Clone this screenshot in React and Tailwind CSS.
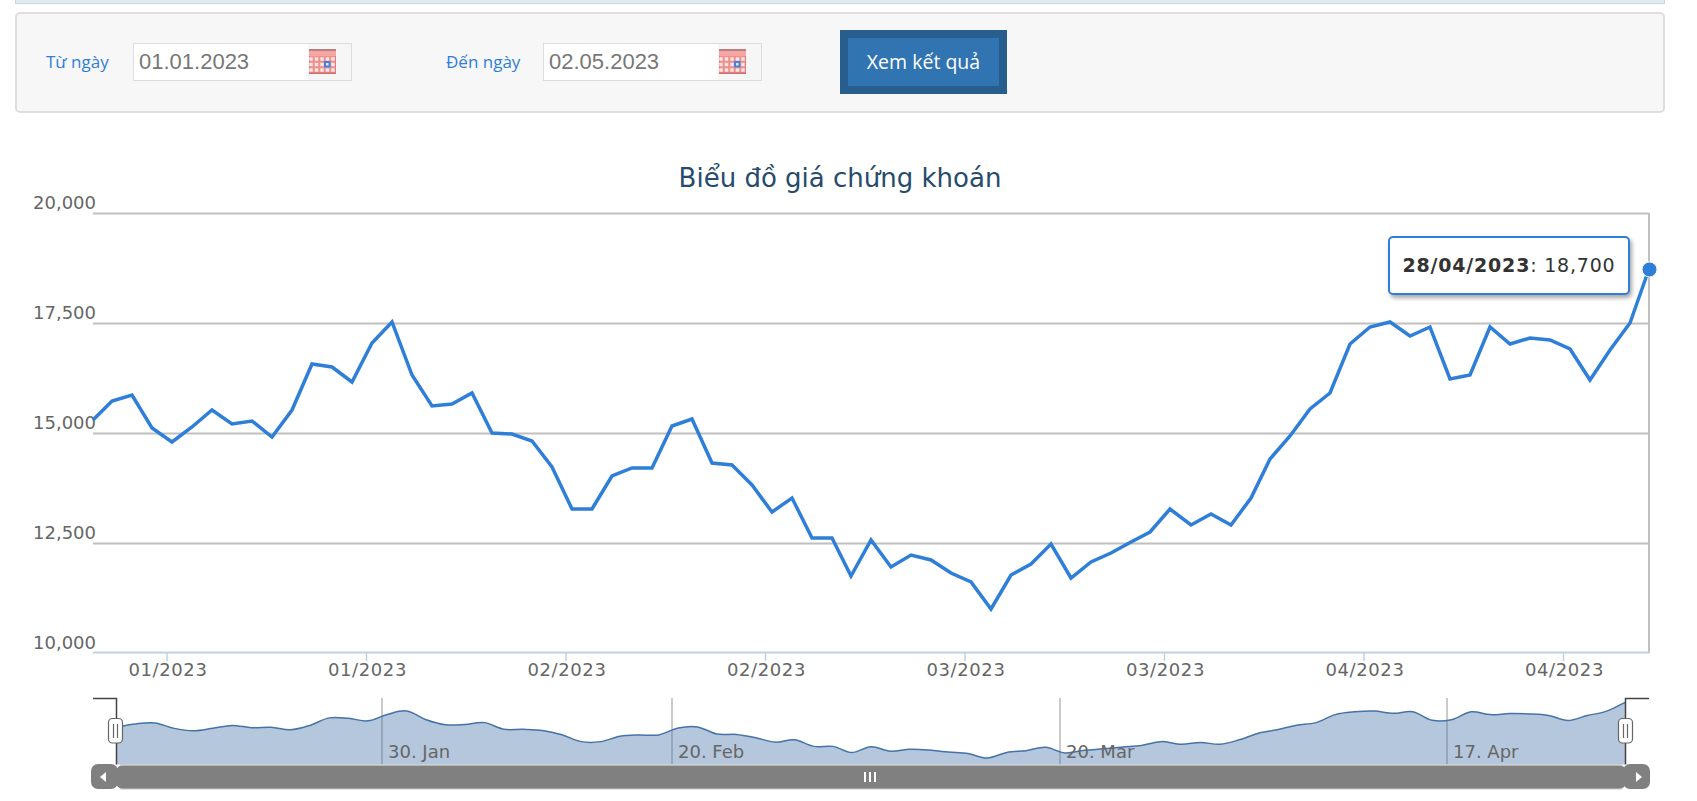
import React from "react";

// chart points in page pixels
const points = [
  [93, 420], [112, 401], [132, 395], [152, 428], [172, 442], [192, 427], [212, 410], [232, 424], [252, 421], [272, 437],
  [292, 410], [312, 364], [332, 367], [352, 382], [372, 343], [392, 322], [412, 375], [432, 406], [452, 404], [472, 393],
  [492, 433], [512, 434], [532, 441], [552, 467], [572, 509], [592, 509], [612, 476], [632, 468], [652, 468], [672, 426],
  [692, 419], [712, 463], [732, 465], [752, 485], [772, 512], [792, 498], [812, 538], [832, 538], [851, 576], [871, 540],
  [891, 567], [911, 555], [931, 560], [951, 573], [971, 582], [991, 609], [1011, 575], [1031, 564], [1051, 544], [1071, 578],
  [1091, 562], [1111, 553], [1131, 542], [1150, 532], [1170, 509], [1191, 525], [1211, 514], [1231, 525], [1251, 498], [1270, 459],
  [1290, 436], [1310, 409], [1330, 393], [1350, 344], [1370, 327], [1390, 322], [1410, 336], [1430, 327], [1450, 379], [1470, 375],
  [1490, 327], [1510, 344], [1530, 338], [1550, 340], [1570, 349], [1590, 380], [1610, 350], [1630, 323], [1649, 269],
];

const linePath = points.map(([x, y], i) => `${i ? "L" : "M"}${x} ${y}`).join(" ");

// navigator series is the same data squeezed into the lower strip
const navPoints = points.map(([x, y]) => [117 + (x - 93) * 0.9692, 711 + (y - 322) * 0.1638]);

function smooth(pts) {
  let d = `M${pts[0][0]} ${pts[0][1]}`;
  for (let i = 0; i < pts.length - 1; i++) {
    const p0 = pts[i - 1] || pts[i];
    const p1 = pts[i];
    const p2 = pts[i + 1];
    const p3 = pts[i + 2] || p2;
    d += ` C${p1[0] + (p2[0] - p0[0]) / 6} ${p1[1] + (p2[1] - p0[1]) / 6} ${p2[0] - (p3[0] - p1[0]) / 6} ${p2[1] - (p3[1] - p1[1]) / 6} ${p2[0]} ${p2[1]}`;
  }
  return d;
}

const navLine = smooth(navPoints);
const navArea = `${navLine} L1625 765 L117 765 Z`;

const yLabels = [
  ["20,000", 213],
  ["17,500", 323],
  ["15,000", 433],
  ["12,500", 543],
  ["10,000", 653],
];
const xTicks = [167, 366.5, 566, 765.5, 965, 1164.5, 1364, 1563.5];
const xLabels = ["01/2023", "01/2023", "02/2023", "02/2023", "03/2023", "03/2023", "04/2023", "04/2023"];
const navLabels = [
  ["30. Jan", 382],
  ["20. Feb", 672],
  ["20. Mar", 1060],
  ["17. Apr", 1447],
];

function CalendarIcon() {
  const cols = [2, 7.5, 13, 18.5, 24];
  const rows = [10, 15.5, 21];
  return (
    <svg width="27" height="25" viewBox="0 0 27 25" className="shrink-0">
      <rect x="0" y="0" width="27" height="25" fill="#ee918e" />
      <rect x="0" y="0" width="27" height="2" fill="#b9807e" />
      <rect x="0" y="2" width="27" height="5" fill="#f6a7a3" />
      <rect x="0" y="23.5" width="27" height="1.5" fill="#d06f6c" />
      <rect x="0" y="7" width="1" height="17" fill="#dd7f7c" />
      <rect x="26" y="7" width="1" height="17" fill="#dd7f7c" />
      {rows.map((r) =>
        cols.map((c) => <rect key={`${r}-${c}`} x={c - 1.7} y={r - 1.7} width="3.4" height="3.4" fill="#fde6e4" />)
      )}
      <rect x="15" y="12" width="6.5" height="6.5" fill="#4a80dc" />
      <rect x="17" y="14" width="2.5" height="2.5" fill="#dfe8fb" />
    </svg>
  );
}

function DateField({ label, value, labelWidth }) {
  return (
    <div className="flex items-center">
      <label className={`${labelWidth} text-[17px] text-[#2f7ed8] font-['Open_Sans',sans-serif]`}>{label}</label>
      <div className="flex items-center w-[219px] h-[38px] border border-[#dcdcdc] bg-white">
        <span className="flex-1 pl-[5px] text-[22px] text-[#777777] font-['Liberation_Sans',sans-serif]">{value}</span>
        <div className="flex items-center w-[43px] h-full pl-[1px] bg-[#f6f6f6]">
          <CalendarIcon />
        </div>
      </div>
    </div>
  );
}

function Chart() {
  const font = "'DejaVu Sans', sans-serif";
  return (
    <svg width="1697" height="610" viewBox="0 191 1697 610" className="block" style={{ fontFamily: font }}>
      {/* plot frame and grid */}
      {yLabels.slice(0, 4).map(([, y]) => (
        <line key={y} x1="93" x2="1649" y1={y + 0.5} y2={y + 0.5} stroke="#c0c0c0" strokeWidth="2" />
      ))}
      <line x1="1649" x2="1649" y1="213" y2="653" stroke="#c0c0c0" strokeWidth="2" />
      <line x1="93" x2="1650" y1="652.5" y2="652.5" stroke="#c0d0e0" strokeWidth="2" />
      {xTicks.map((x) => (
        <line key={x} x1={x} x2={x} y1="652" y2="661" stroke="#c0d0e0" strokeWidth="1.5" />
      ))}

      {yLabels.map(([t, y]) => (
        <text key={t} x="96" y={y - 4} textAnchor="end" fontSize="18" fill="#666666">
          {t}
        </text>
      ))}
      {xLabels.map((t, i) => (
        <text key={i} x={xTicks[i] + 1} y="676" textAnchor="middle" fontSize="18" letterSpacing="0.6" fill="#666666">
          {t}
        </text>
      ))}

      <path d={linePath} fill="none" stroke="#2f7ed8" strokeWidth="3.5" strokeLinejoin="miter" />
      <circle cx="1649.5" cy="269.5" r="7.5" fill="#2f7ed8" stroke="#ffffff" strokeWidth="1" />

      {/* navigator */}
      {navLabels.map(([, x]) => (
        <line key={x} x1={x} x2={x} y1="698" y2="765" stroke="#b8b8b8" strokeWidth="1.5" />
      ))}
      <path d={navArea} fill="#4572a7" fillOpacity="0.4" />
      <path d={navLine} fill="none" stroke="#4572a7" strokeWidth="1.5" />
      {navLabels.map(([t, x]) => (
        <text key={t} x={x + 6} y="758" fontSize="18" fill="#666666">
          {t}
        </text>
      ))}
      <path d="M93 698.5 H116.5 V765" fill="none" stroke="#444444" strokeWidth="1.5" />
      <path d="M1649 698.5 H1625.5 V765" fill="none" stroke="#444444" strokeWidth="1.5" />
      {[108.5, 1618.5].map((x) => (
        <g key={x}>
          <rect x={x} y="718.5" width="14" height="24.5" rx="4" fill="#ffffff" stroke="#666666" strokeWidth="1.2" />
          <line x1={x + 5} x2={x + 5} y1="724" y2="738" stroke="#666666" strokeWidth="1.2" />
          <line x1={x + 9} x2={x + 9} y1="724" y2="738" stroke="#666666" strokeWidth="1.2" />
        </g>
      ))}

      {/* scrollbar */}
      <rect x="91" y="764.5" width="1559" height="25" fill="#ffffff" />
      <rect x="91" y="764" width="27" height="25" rx="7" fill="#808080" />
      <rect x="1623" y="764" width="27" height="25" rx="7" fill="#808080" />
      <rect x="116" y="765" width="1510" height="24" rx="7" fill="#808080" />
      <line x1="120" x2="1622" y1="765" y2="765" stroke="#c8c8c8" strokeWidth="1.5" />
      <line x1="120" x2="1622" y1="789" y2="789" stroke="#c8c8c8" strokeWidth="1" />
      <path d="M106 772 L100 777 L106 782 Z" fill="#ffffff" />
      <path d="M1636 772 L1642 777 L1636 782 Z" fill="#ffffff" />
      <rect x="864" y="772" width="2" height="10" fill="#ffffff" />
      <rect x="869" y="772" width="2" height="10" fill="#ffffff" />
      <rect x="874" y="772" width="2" height="10" fill="#ffffff" />
    </svg>
  );
}

export default function App() {
  return (
    <div className="relative w-[1697px] h-[801px] overflow-hidden bg-white">
      {/* strip left over from the block above */}
      <div className="ml-[15px] w-[1650px] h-[4px] bg-[#dfebf3] border border-t-0 border-[#c8d6e0]"></div>

      {/* Filter panel */}
      <div className="ml-[15px] w-[1650px] mt-[8px] h-[101px] flex items-center pl-[29px] pb-[2px] bg-[#f7f7f7] border-2 border-[#dedede] rounded-[5px]">
        <DateField label="Từ ngày" value="01.01.2023" labelWidth="w-[87px]" />
        <div className="ml-[94px]">
          <DateField label="Đến ngày" value="02.05.2023" labelWidth="w-[97px]" />
        </div>
        <button className="ml-[78px] w-[167px] h-[64px] border-[8px] border-[#285e8e] bg-[#3174b2] text-white text-[19.5px] font-['Open_Sans',sans-serif]">
          Xem kết quả
        </button>
      </div>

      {/* Chart */}
      <div className="relative">
        <h2 className="ml-[15px] w-[1650px] h-[78px] pt-[52px] text-center text-[26px] leading-[26px] font-normal text-[#274b6d] font-['DejaVu_Sans',sans-serif]">
          Biểu đồ giá chứng khoán
        </h2>
        <Chart />
        <div className="absolute left-[1388px] top-[123px] flex items-center justify-center w-[242px] h-[59px] bg-white border-2 border-[#2f7ed8] rounded-[5px] shadow-[2px_3px_4px_rgba(0,0,0,0.35)] text-[19px] tracking-[0.8px] text-[#333333] font-['DejaVu_Sans',sans-serif]">
          <b>28/04/2023</b>:&nbsp;18,700
        </div>
      </div>
    </div>
  );
}
